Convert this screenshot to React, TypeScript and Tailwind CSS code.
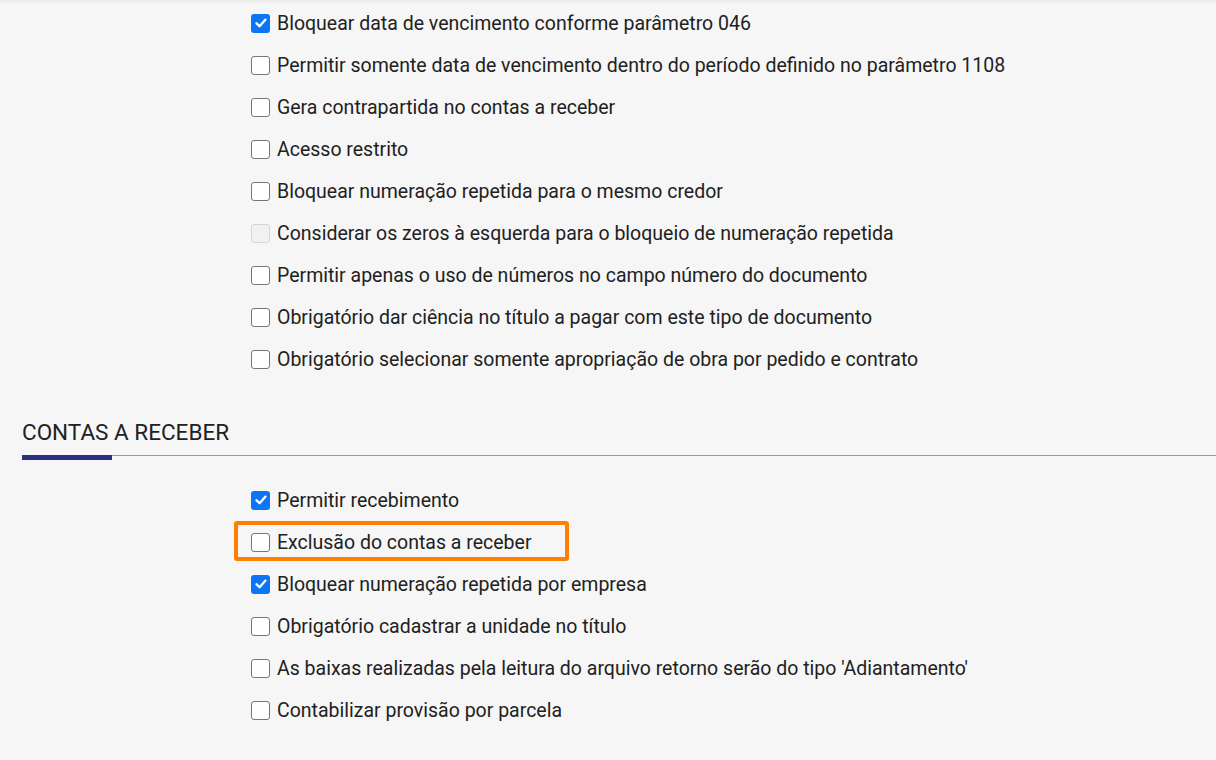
import React from "react";

type Item = { label: string; state: "checked" | "unchecked" | "disabled"; highlight?: boolean };

const section1: Item[] = [
  { label: "Bloquear data de vencimento conforme parâmetro 046", state: "checked" },
  { label: "Permitir somente data de vencimento dentro do período definido no parâmetro 1108", state: "unchecked" },
  { label: "Gera contrapartida no contas a receber", state: "unchecked" },
  { label: "Acesso restrito", state: "unchecked" },
  { label: "Bloquear numeração repetida para o mesmo credor", state: "unchecked" },
  { label: "Considerar os zeros à esquerda para o bloqueio de numeração repetida", state: "disabled" },
  { label: "Permitir apenas o uso de números no campo número do documento", state: "unchecked" },
  { label: "Obrigatório dar ciência no título a pagar com este tipo de documento", state: "unchecked" },
  { label: "Obrigatório selecionar somente apropriação de obra por pedido e contrato", state: "unchecked" },
];

const section2: Item[] = [
  { label: "Permitir recebimento", state: "checked" },
  { label: "Exclusão do contas a receber", state: "unchecked", highlight: true },
  { label: "Bloquear numeração repetida por empresa", state: "checked" },
  { label: "Obrigatório cadastrar a unidade no título", state: "unchecked" },
  { label: "As baixas realizadas pela leitura do arquivo retorno serão do tipo 'Adiantamento'", state: "unchecked" },
  { label: "Contabilizar provisão por parcela", state: "unchecked" },
];

function Box({ state }: { state: Item["state"] }) {
  if (state === "checked") {
    return (
      <span className="flex h-[19px] w-[19px] shrink-0 items-center justify-center rounded-[3px] bg-[#0b75f5]">
        <svg width="14" height="14" viewBox="0 0 14 14" fill="none">
          <path d="M2.5 7.3 L5.6 10.2 L11.5 3.6" stroke="white" strokeWidth="2.3" strokeLinecap="round" strokeLinejoin="round" />
        </svg>
      </span>
    );
  }
  if (state === "disabled") {
    return <span className="h-[19px] w-[19px] shrink-0 rounded-[3px] border-[1.5px] border-[#d6d6d6] bg-[#f1f1f1]" />;
  }
  return <span className="h-[19px] w-[19px] shrink-0 rounded-[3px] border-[1.5px] border-[#767676] bg-white" />;
}

function Row({ item }: { item: Item }) {
  return (
    <div className="relative flex h-[42px] items-center gap-[7px] pl-[251px]">
      {item.highlight && (
        <div className="pointer-events-none absolute left-[234px] top-0 h-[40px] w-[335px] rounded-[3px] border-[4px] border-[#ff8000]" />
      )}
      <Box state={item.state} />
      <span className="pt-[2px] text-[19.5px] leading-none text-[#212121]">{item.label}</span>
    </div>
  );
}

export default function App() {
  return (
    <div
      className="relative min-h-[760px] w-full overflow-hidden bg-[#f6f6f6]"
      style={{ fontFamily: "Roboto, 'Liberation Sans', sans-serif" }}
    >
      <div className="pointer-events-none absolute left-0 right-0 top-0 h-[4px] bg-gradient-to-b from-[#e9e9e9] to-transparent" />
      <div className="flex flex-col pt-[2px]">
        {section1.map((it) => (
          <Row key={it.label} item={it} />
        ))}
      </div>
      <div className="mt-[38px] pl-[22px]">
        <div className="h-[28px] text-[22.5px] leading-[28px] text-[#212121]">CONTAS A RECEBER</div>
        <div className="mt-[9px] flex items-start">
          <div className="h-[5px] w-[90px] bg-[#2b3380]" />
          <div className="h-[1px] flex-1 bg-[#9a9a9a]" />
        </div>
      </div>
      <div className="mt-[19px] flex flex-col">
        {section2.map((it) => (
          <Row key={it.label} item={it} />
        ))}
      </div>
    </div>
  );
}
